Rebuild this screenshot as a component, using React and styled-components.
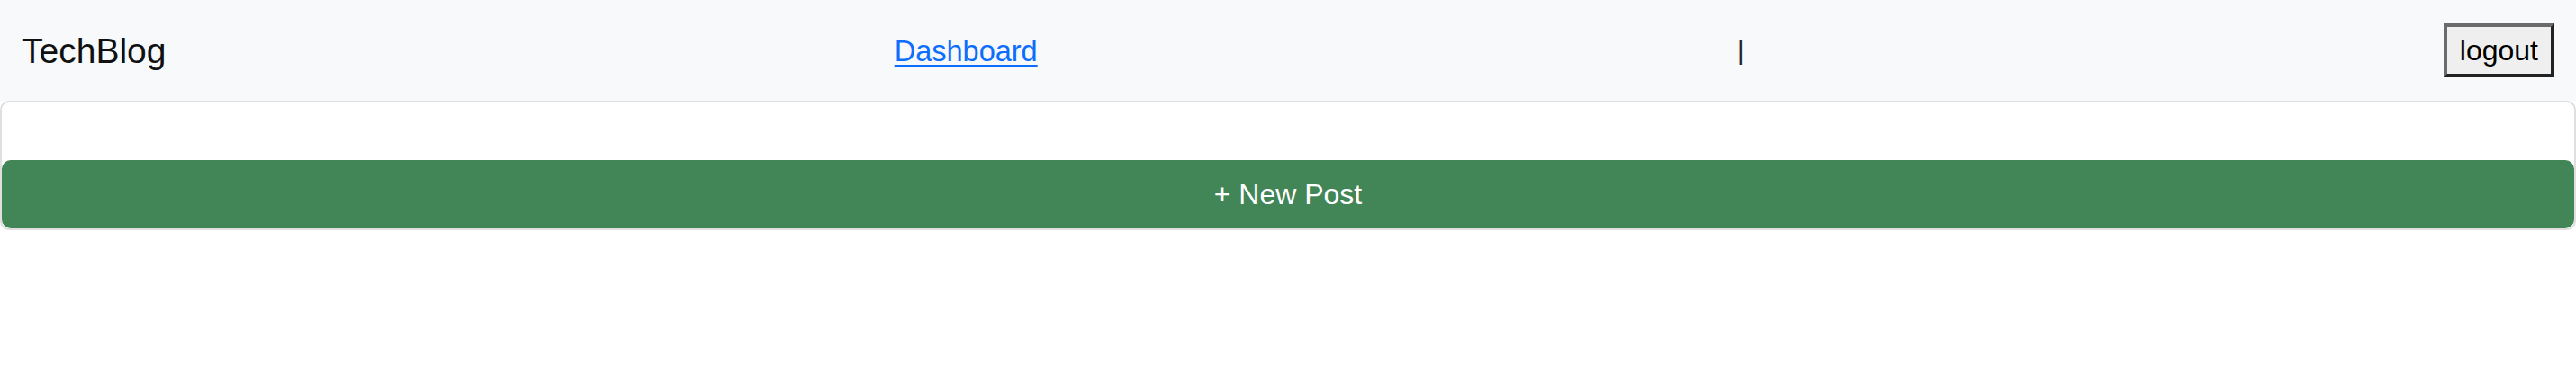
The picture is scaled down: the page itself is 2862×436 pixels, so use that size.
import React from "react";
import styled, { createGlobalStyle } from "styled-components";

const Global = createGlobalStyle`
  html, body {
    margin: 0;
    padding: 0;
    background: #ffffff;
    font-family: "Liberation Sans", Arial, sans-serif;
    color: #212529;
  }
  * { box-sizing: border-box; }
`;

const NavBar = styled.nav`
  height: 112px;
  background: #f8f9fa;
  padding: 0 24px;
  display: flex;
  align-items: center;
  justify-content: space-between;
`;

const Brand = styled.span`
  font-size: 39px;
  color: #111;
  padding-top: 1px;
`;

const NavLink = styled.a`
  font-size: 32.5px;
  color: #0d6efd;
  text-decoration: underline;
  text-decoration-thickness: 2px;
  text-underline-offset: 4px;
  margin-left: 32px;
  padding-top: 3px;
  cursor: pointer;
`;

const Separator = styled.span`
  font-size: 29px;
  color: #212529;
`;

const LogoutButton = styled.button`
  font-family: "Liberation Sans", Arial, sans-serif;
  font-size: 32px;
  line-height: 36px;
  height: 60px;
  padding: 8px 14px;
  background: #efefef;
  color: #000;
  border-width: 4px;
  border-style: solid;
  border-color: #6b6b6b #222 #222 #6b6b6b;
  border-radius: 0;
  cursor: pointer;
`;

const Card = styled.section`
  border: 2px solid #dfdfdf;
  border-radius: 10px;
  padding-top: 64px;
  background: #fff;
`;

const NewPostButton = styled.button`
  display: block;
  width: 100%;
  height: 76px;
  border: none;
  border-radius: 10px;
  background: #428557;
  color: #fff;
  font-family: "Liberation Sans", Arial, sans-serif;
  font-size: 32px;
  cursor: pointer;
`;

export default function App() {
  return (
    <>
      <Global />
      <NavBar>
        <Brand>TechBlog</Brand>
        <NavLink href="#">Dashboard</NavLink>
        <Separator>|</Separator>
        <LogoutButton>logout</LogoutButton>
      </NavBar>
      <Card>
        <NewPostButton>+ New Post</NewPostButton>
      </Card>
    </>
  );
}
